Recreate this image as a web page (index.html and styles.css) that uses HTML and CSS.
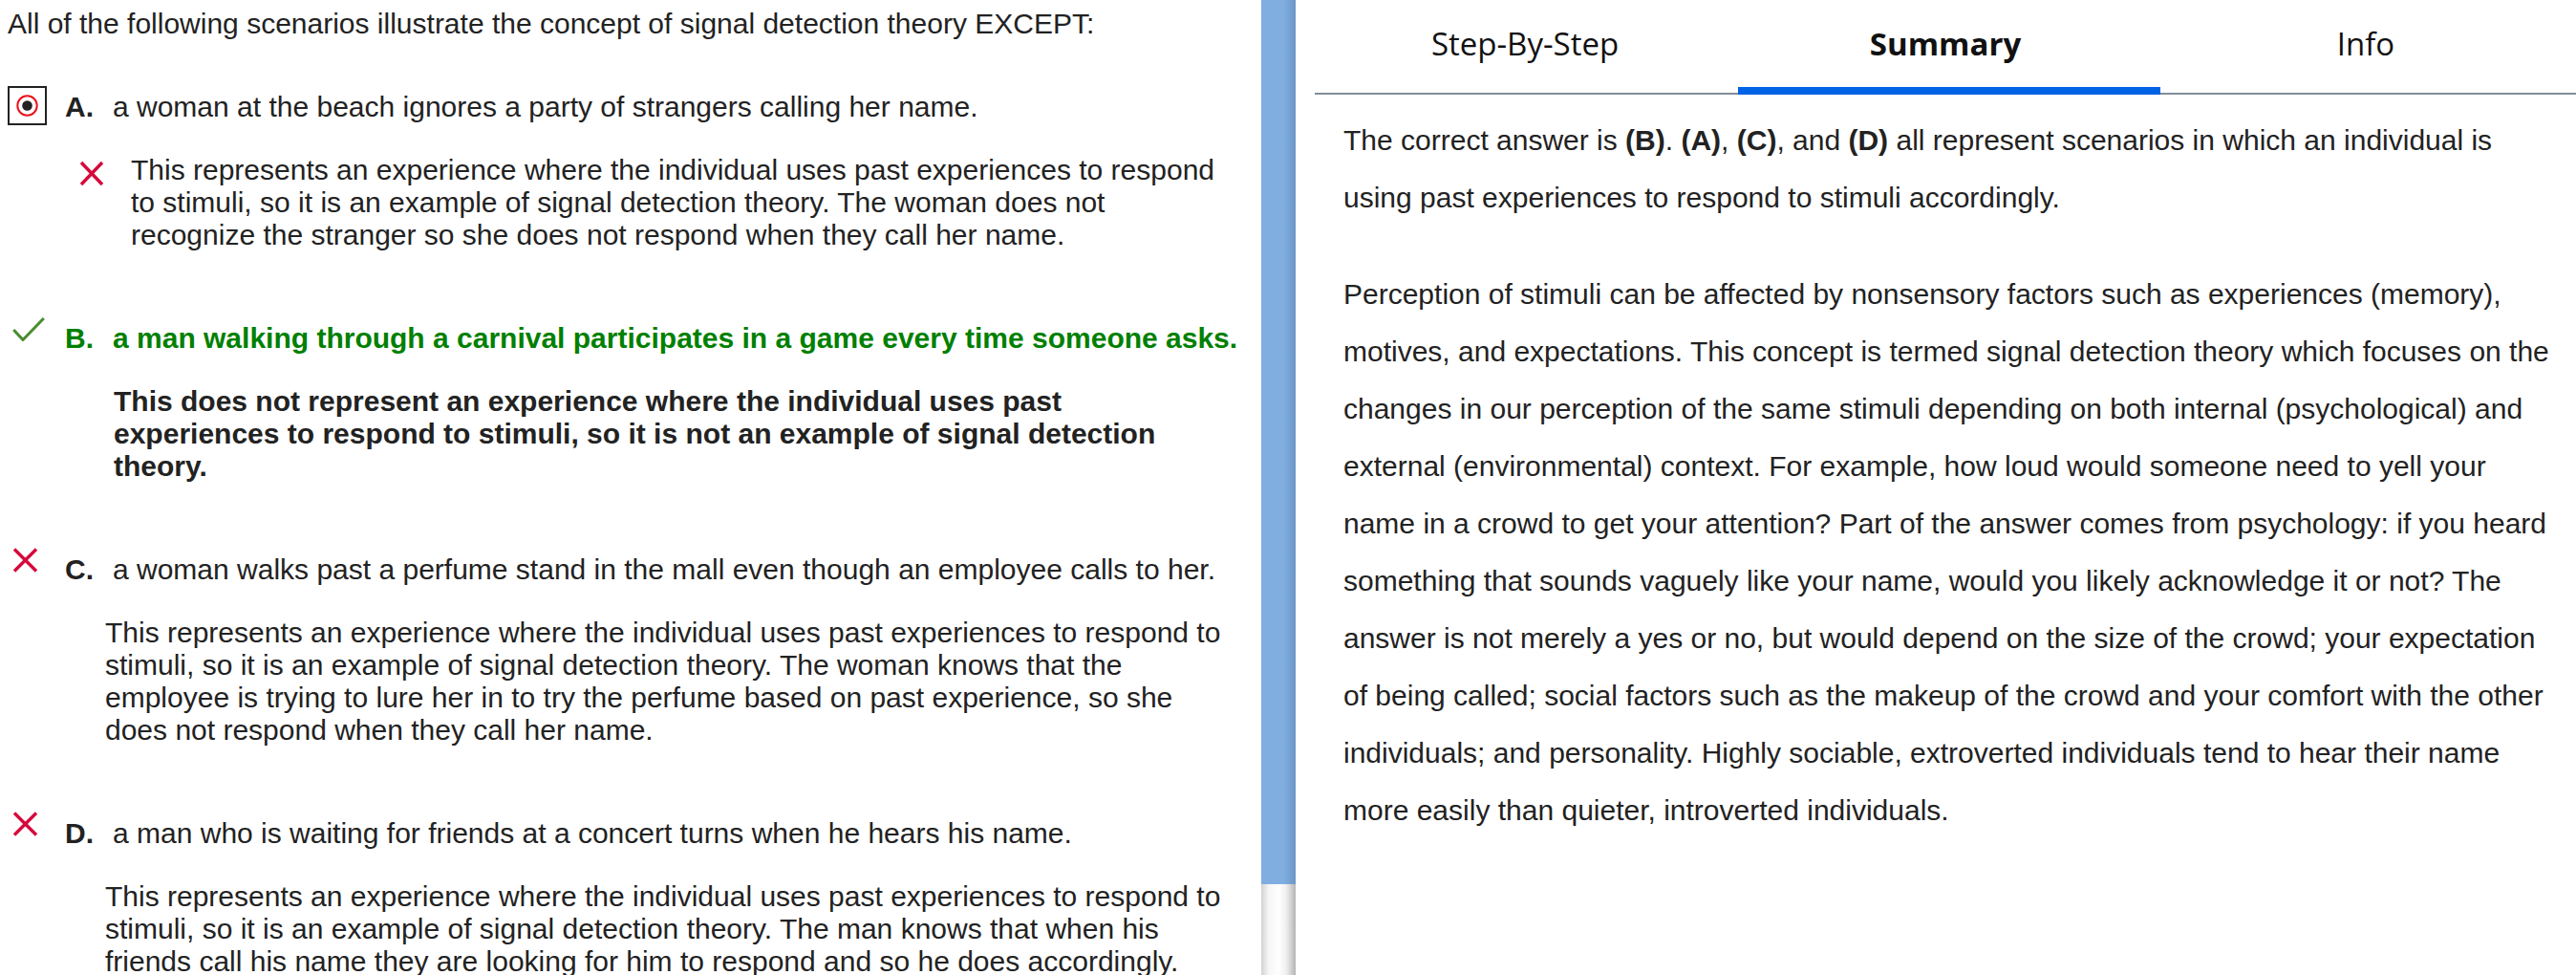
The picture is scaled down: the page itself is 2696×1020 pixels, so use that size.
FILE: index.html
```html
<!DOCTYPE html>
<html lang="en">
<head>
<meta charset="utf-8">
<title>Signal detection theory</title>
<link rel="stylesheet" href="styles.css">
</head>
<body>
<div class="app">
  <section class="question-pane">
    <p class="stem">All of the following scenarios illustrate the concept of signal detection theory EXCEPT:</p>

    <div class="option">
      <div class="opt-row">
        <div class="opt-icon">
          <div class="radio-box">
            <svg class="radio" width="23" height="23" viewBox="0 0 23 23"><circle cx="11.5" cy="11.5" r="10.2" fill="#fff" stroke="#e8141c" stroke-width="2"/><circle cx="11.5" cy="11.5" r="5.3" fill="#222"/></svg>
          </div>
        </div>
        <span class="opt-letter">A.</span>
        <span class="opt-text">a woman at the beach ignores a party of strangers calling her name.</span>
      </div>
      <div class="expl expl-a">
        <svg class="x-small" width="26" height="27" viewBox="0 0 26 27"><path d="M2 2 L24 25 M24 2 L2 25" stroke="#d6083b" stroke-width="3.4" fill="none"/></svg>
        <div class="expl-text">This represents an experience where the individual uses past experiences to respond to stimuli, so it is an example of signal detection theory. The woman does not recognize the stranger so she does not respond when they call her name.</div>
      </div>
    </div>

    <div class="option correct">
      <div class="opt-row">
        <div class="opt-icon">
          <svg class="check" width="34" height="25" viewBox="0 0 34 25"><path d="M1.2 13 L11 23.5 L32.8 1" stroke="#4a8c2f" stroke-width="3" fill="none"/></svg>
        </div>
        <span class="opt-letter">B.</span>
        <span class="opt-text">a man walking through a carnival participates in a game every time someone asks.</span>
      </div>
      <div class="expl expl-b">
        <div class="expl-text">This does not represent an experience where the individual uses past experiences to respond to stimuli, so it is not an example of signal detection theory.</div>
      </div>
    </div>

    <div class="option">
      <div class="opt-row">
        <div class="opt-icon">
          <svg class="x-mark" width="27" height="26" viewBox="0 0 27 26"><path d="M2 1.5 L25 24.5 M25 1.5 L2 24.5" stroke="#d6083b" stroke-width="3.4" fill="none"/></svg>
        </div>
        <span class="opt-letter">C.</span>
        <span class="opt-text">a woman walks past a perfume stand in the mall even though an employee calls to her.</span>
      </div>
      <div class="expl expl-plain">
        <div class="expl-text">This represents an experience where the individual uses past experiences to respond to stimuli, so it is an example of signal detection theory. The woman knows that the employee is trying to lure her in to try the perfume based on past experience, so she does not respond when they call her name.</div>
      </div>
    </div>

    <div class="option">
      <div class="opt-row">
        <div class="opt-icon">
          <svg class="x-mark" width="27" height="26" viewBox="0 0 27 26"><path d="M2 1.5 L25 24.5 M25 1.5 L2 24.5" stroke="#d6083b" stroke-width="3.4" fill="none"/></svg>
        </div>
        <span class="opt-letter">D.</span>
        <span class="opt-text">a man who is waiting for friends at a concert turns when he hears his name.</span>
      </div>
      <div class="expl expl-plain">
        <div class="expl-text">This represents an experience where the individual uses past experiences to respond to stimuli, so it is an example of signal detection theory. The man knows that when his friends call his name they are looking for him to respond and so he does accordingly.</div>
      </div>
    </div>
  </section>

  <div class="scrollbar">
    <div class="thumb"></div>
    <div class="track"></div>
  </div>

  <section class="answer-pane">
    <nav class="tabs">
      <div class="tab">Step-By-Step</div>
      <div class="tab active">Summary</div>
      <div class="tab">Info</div>
    </nav>
    <div class="summary">
      <p class="p1">The correct answer is <b>(B)</b>. <b>(A)</b>, <b>(C)</b>, and <b>(D)</b> all represent scenarios in which an individual is using past experiences to respond to stimuli accordingly.</p>
      <p class="p2">Perception of stimuli can be affected by nonsensory factors such as experiences (memory), motives, and expectations. This concept is termed signal detection theory which focuses on the changes in our perception of the same stimuli depending on both internal (psychological) and external (environmental) context. For example, how loud would someone need to yell your name in a crowd to get your attention? Part of the answer comes from psychology: if you heard something that sounds vaguely like your name, would you likely acknowledge it or not? The answer is not merely a yes or no, but would depend on the size of the crowd; your expectation of being called; social factors such as the makeup of the crowd and your comfort with the other individuals; and personality. Highly sociable, extroverted individuals tend to hear their name more easily than quieter, introverted individuals.</p>
    </div>
  </section>
</div>
</body>
</html>
```

FILE: styles.css
```css
* { box-sizing: border-box; }

html, body {
  margin: 0;
  padding: 0;
  background: #fff;
}

body {
  font-family: "Liberation Sans", Arial, sans-serif;
  color: #222;
  overflow: hidden;
}

.app {
  display: flex;
  height: 1020px;
  overflow: hidden;
}

/* ---------- left: question ---------- */
.question-pane {
  width: 1320px;
  flex: none;
  padding: 8px 20px 0 8px;
  font-size: 30px;
  line-height: 34px;
  overflow: hidden;
}

.stem {
  margin: 0 0 53px;
}

.option {
  margin-bottom: 74px;
}

.opt-row {
  display: flex;
  align-items: flex-start;
}

.opt-icon {
  width: 60px;
  height: 34px;
  flex: none;
}

.radio-box {
  width: 41px;
  height: 41px;
  margin-top: -5px;
  border: 2px solid #222;
  display: flex;
  align-items: center;
  justify-content: center;
}

.radio { display: block; }

.check {
  display: block;
  margin: -5px 0 0 5px;
}

.x-mark {
  display: block;
  margin: -6px 0 0 5px;
}

.opt-letter {
  width: 50px;
  flex: none;
  font-weight: bold;
}

.opt-text {
  flex: 1;
}

.correct .opt-row {
  color: #008000;
  font-weight: bold;
}

.expl {
  display: flex;
  align-items: flex-start;
  margin-top: 32px;
  padding-right: 15px;
}

.expl-text { flex: 1; }

.expl-a { padding-left: 75px; }

.x-small {
  display: block;
  flex: none;
  margin: 7px 28px 0 0;
}

.expl-b {
  padding-left: 111px;
  font-weight: bold;
}

.expl-plain { padding-left: 102px; }

/* ---------- scrollbar ---------- */
.scrollbar {
  width: 36px;
  flex: none;
  display: flex;
  flex-direction: column;
}

.thumb {
  height: 925px;
  background: linear-gradient(to right, #80aee0 0%, #80aee0 66%, #6c96c7 100%);
}

.track {
  flex: 1;
  background: linear-gradient(to right, #d2d2d2 0%, #f6f6f6 22%, #ffffff 50%, #f0f0f0 72%, #b4b4b4 100%);
}

/* ---------- right: answer ---------- */
.answer-pane {
  flex: 1;
  padding-left: 20px;
}

.tabs {
  display: flex;
  border-bottom: 2px solid #808e98;
}

.tab {
  flex: 1;
  height: 97px;
  padding-top: 23px;
  text-align: center;
  font-family: "Open Sans", "Noto Sans", sans-serif;
  font-size: 33px;
  line-height: normal;
  color: #111;
  position: relative;
}

.tab.active {
  font-weight: 700;
}

.tab.active::after {
  content: "";
  position: absolute;
  left: 3px;
  right: -5px;
  bottom: -2px;
  height: 8px;
  background: #0063e5;
}

.summary {
  padding: 0 19px 0 30px;
  font-size: 30px;
  line-height: 60px;
  color: #222;
}

.summary p { margin: 0; }

.summary .p1 { margin-top: 18px; }

.summary .p2 { margin-top: 41px; }
```
